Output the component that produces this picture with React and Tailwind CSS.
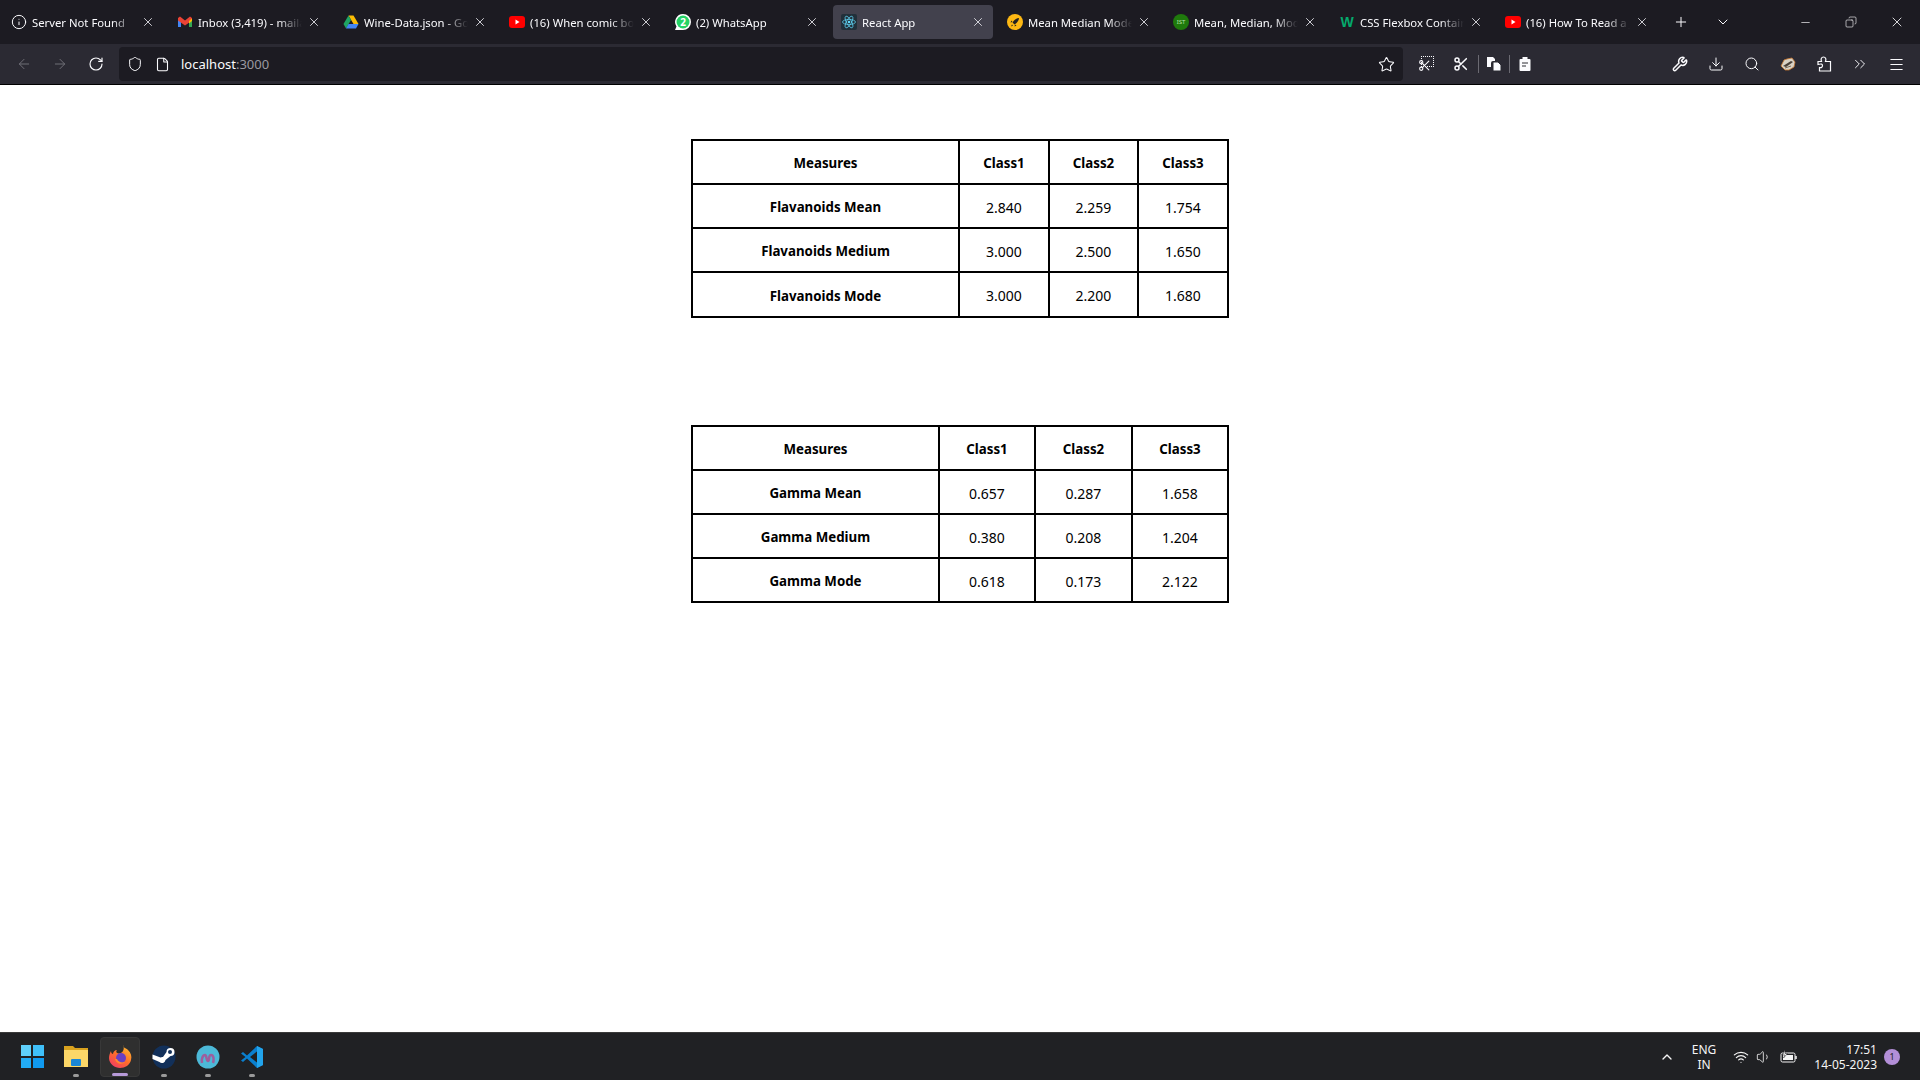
import { X, Plus, ChevronDown, Minus, Copy, ArrowLeft, ArrowRight, RotateCw, Shield, File, Star, Scissors, Wrench, Download, Search, ChevronsRight, Menu, ChevronUp, Wifi, Volume1, Info } from 'lucide-react'

const GmailIcon = () => (
  <svg viewBox="0 0 16 16" className="w-4 h-4">
    <path d="M1 4v9h3V7z" fill="#4285f4" />
    <path d="M15 4v9h-3V7z" fill="#34a853" />
    <path d="M1 4l2-1.500L8 6.500l5-4L15 4v2.500L8 11.500 1 6.500z" fill="#ea4335" />
    <path d="M12 7l3-2.500V7l-3 2.400z" fill="#fbbc04" />
  </svg>
)

const DriveIcon = () => (
  <svg viewBox="0 0 16 16" className="w-4 h-4">
    <path d="M5.500 1.500h5L15.500 10h-5z" fill="#fbbc04" />
    <path d="M5.500 1.500L.5 10 3 14.500 8 6z" fill="#1fa463" />
    <path d="M3 14.500h10l2.500-4.500H5.500z" fill="#4285f4" />
  </svg>
)

const YoutubeIcon = () => (
  <svg viewBox="0 0 16 16" className="w-4 h-4">
    <rect x="0" y="2" width="16" height="12" rx="3" fill="#f00" />
    <path d="M6.500 5.500L10.500 8l-4 2.500z" fill="#fff" />
  </svg>
)

const WhatsappIcon = () => (
  <span className="relative w-4 h-4 flex items-center justify-center">
    <svg viewBox="0 0 16 16" className="absolute inset-0 w-4 h-4">
      <path d="M8 0a8 8 0 0 1 0 16H0l1.500-3.500A8 8 0 0 1 8 0z" fill="#fff" />
      <circle cx="8" cy="8" r="6.500" fill="#25d366" />
    </svg>
    <span className="relative text-[10px] font-bold text-white leading-none">2</span>
  </span>
)

const ReactIcon = () => (
  <svg viewBox="0 0 16 16" className="w-4 h-4">
    <rect width="16" height="16" rx="2" fill="#22303a" />
    <g fill="none" stroke="#61dafb" strokeWidth="0.7">
      <ellipse cx="8" cy="8" rx="6.500" ry="2.500" />
      <ellipse cx="8" cy="8" rx="6.500" ry="2.500" transform="rotate(60 8 8)" />
      <ellipse cx="8" cy="8" rx="6.500" ry="2.500" transform="rotate(120 8 8)" />
    </g>
    <circle cx="8" cy="8" r="1.300" fill="#61dafb" />
  </svg>
)

const RocketIcon = () => (
  <svg viewBox="0 0 16 16" className="w-4 h-4">
    <circle cx="8" cy="8" r="8" fill="#fdb813" />
    <path d="M12 4c-3 .3-5 2-6.500 4.500L7.500 10.500C10 9 11.700 7 12 4z" fill="#222" />
    <path d="M5.500 8l-2 .5 1-2zM8 10.500l-.5 2 2-1zM5 10.500l-1 2 2-1z" fill="#222" />
  </svg>
)

const IstIcon = () => (
  <span className="w-4 h-4 rounded-full bg-[#1f7a0c] flex items-center justify-center text-[6px] leading-none text-[#b7e0a8]">IST</span>
)

const W3Icon = () => (
  <span className="w-4 h-4 flex items-start justify-center font-black text-[14px] leading-4 text-[#04aa6d] font-['Liberation_Sans',sans-serif]">W</span>
)

const tabs = [
  { title: 'Server Not Found', icon: <Info size={16} strokeWidth={1.5} className="text-[#fbfbfe]" /> },
  { title: 'Inbox (3,419) - mailarchive', icon: <GmailIcon /> },
  { title: 'Wine-Data.json - Google Drive', icon: <DriveIcon /> },
  { title: '(16) When comic book movies', icon: <YoutubeIcon /> },
  { title: '(2) WhatsApp', icon: <WhatsappIcon /> },
  { title: 'React App', icon: <ReactIcon />, active: true },
  { title: 'Mean Median Mode Calculator', icon: <RocketIcon /> },
  { title: 'Mean, Median, Mode and Range', icon: <IstIcon /> },
  { title: 'CSS Flexbox Container Properties', icon: <W3Icon /> },
  { title: '(16) How To Read a JSON File', icon: <YoutubeIcon /> },
]

const flavanoids = {
  rows: [
    ['Flavanoids Mean', '2.840', '2.259', '1.754'],
    ['Flavanoids Medium', '3.000', '2.500', '1.650'],
    ['Flavanoids Mode', '3.000', '2.200', '1.680'],
  ],
  widths: ['w-[267px]', 'w-[90px]', 'w-[89px]', 'w-[90px]'],
  lastRow: 'h-[45px]',
}

const gamma = {
  rows: [
    ['Gamma Mean', '0.657', '0.287', '1.658'],
    ['Gamma Medium', '0.380', '0.208', '1.204'],
    ['Gamma Mode', '0.618', '0.173', '2.122'],
  ],
  widths: ['w-[247px]', 'w-[96px]', 'w-[97px]', 'w-[96px]'],
  lastRow: 'h-[44px]',
}

function StatsTable({ data }) {
  const cell = 'border-2 border-black text-center'
  return (
    <table className="w-[537px] table-fixed border-collapse border-2 border-black text-black">
      <colgroup>
        {data.widths.map((w, i) => <col key={i} className={w} />)}
      </colgroup>
      <thead>
        <tr>
          {['Measures', 'Class1', 'Class2', 'Class3'].map(h => (
            <th key={h} className={`${cell} h-[44px] p-0 pt-[4px] text-[13.3px] font-bold`}>{h}</th>
          ))}
        </tr>
      </thead>
      <tbody>
        {data.rows.map((row, r) => {
          const h = r === 2 ? data.lastRow : 'h-[44px]'
          return (
            <tr key={row[0]}>
              <th className={`${cell} ${h} p-0 pt-[4px] text-[13.3px] font-bold`}>{row[0]}</th>
              {row.slice(1).map((v, i) => <td key={i} className={`${cell} ${h} p-0 pt-[2px] text-[14px] font-normal`}>{v}</td>)}
            </tr>
          )
        })}
      </tbody>
    </table>
  )
}

function Tab({ title, icon, active }) {
  return (
    <div className="w-[166px] px-[3px] flex items-center">
      <div className={`w-full h-[34px] rounded flex items-center pl-2 pr-2 gap-[5px] ${active ? 'bg-[#42414d]' : ''}`}>
        <span className="w-4 h-4 shrink-0 flex items-center justify-center">{icon}</span>
        <span className="flex-1 min-w-0 pt-[2px] overflow-hidden whitespace-nowrap text-[11.3px] text-[#fbfbfe] [mask-image:linear-gradient(to_left,transparent,black_24px)]">{title}</span>
        <X size={14} strokeWidth={1.5} className="shrink-0 text-[#e5e5ea]" />
      </div>
    </div>
  )
}

function ToolIcon({ children, className = 'w-9' }) {
  return <div className={`${className} h-10 flex items-center justify-center text-[#fbfbfe] shrink-0`}>{children}</div>
}

const ScreenshotIcon = () => (
  <span className="relative w-4 h-4 block">
    <span className="absolute top-0 right-0 w-[13px] h-[11px] border border-dotted border-[#fbfbfe]" />
    <Scissors size={13} strokeWidth={2} className="absolute bottom-0 left-0" />
  </span>
)

const DocsIcon = () => (
  <svg viewBox="0 0 16 16" className="w-4 h-4" fill="#fbfbfe">
    <path d="M1 1h6l2 2v2H7a2 2 0 0 0-2 2v4H1z" />
    <path d="M7 6h5l3 3v6H7z" stroke="#2b2a33" strokeWidth="1" />
  </svg>
)

const ClipboardIcon = () => (
  <svg viewBox="0 0 16 16" className="w-4 h-4">
    <path d="M5.500 1h5v2h2a1 1 0 0 1 1 1v10a1 1 0 0 1-1 1h-9a1 1 0 0 1-1-1V4a1 1 0 0 1 1-1h2z" fill="#fbfbfe" />
    <path d="M5 7h6M5 10h4" stroke="#2b2a33" strokeWidth="1" />
  </svg>
)

const ExtensionIcon = () => (
  <svg viewBox="0 0 16 16" className="w-4 h-4" fill="none" stroke="#fbfbfe" strokeWidth="1.200">
    <path d="M2 5.500h3.500C4.500 3 5.500 1 7.500 1s3 2 2 4.500H14.500V15H3.500v-3.500C5.500 12 6.500 11 6.500 9.500S5.500 7.500 2 8.500z" />
  </svg>
)

function FoxAvatar() {
  return (
    <svg viewBox="0 0 16 16" className="w-4 h-4">
      <path d="M1 10l3-6 3-1 5-1 3 4-1 5-5 3H5z" fill="#d9d2c5" stroke="#c9772f" strokeWidth="0.8" />
      <path d="M3 10l8-5 2 1-7 5z" fill="#4a4038" />
      <path d="M5 12l6-2" stroke="#7a6a58" strokeWidth="1" />
    </svg>
  )
}

const BatteryIcon = () => (
  <svg viewBox="0 0 18 14" className="w-[18px] h-[14px]" fill="none">
    <rect x="1" y="3" width="14" height="9" rx="1.500" stroke="#f5f5f5" strokeWidth="1" />
    <rect x="3" y="5" width="10" height="5" fill="#f5f5f5" />
    <path d="M16 6v3" stroke="#f5f5f5" strokeWidth="1.500" />
    <path d="M5 0L2.500 5H5L3.500 8 7.500 3.500H5z" fill="#f5f5f5" stroke="#202124" strokeWidth="0.5" />
  </svg>
)

const TaskDot = () => <span className="absolute bottom-0 left-1/2 -translate-x-1/2 w-[6px] h-[3px] rounded-full bg-[#9a9a9a]" />

function TaskbarIcons() {
  return (
    <div className="flex items-center pl-[10px] h-full">
      <div className="w-11 h-10 flex items-center justify-center">
        <div className="grid grid-cols-2 gap-[2px] w-[23px] h-[23px]">
          <span className="bg-[#5fd0fb]" />
          <span className="bg-[#3fc0fa]" />
          <span className="bg-[#22acf5]" />
          <span className="bg-[#109af0]" />
        </div>
      </div>
      <div className="relative w-11 h-10 flex items-center justify-center">
        <svg viewBox="0 0 24 24" className="w-6 h-6">
          <path d="M0 1h9l2 2h13v19H0z" fill="#d9a21f" />
          <path d="M0 5h24v17H0z" fill="#fcd768" />
          <rect x="7" y="14" width="10" height="7" rx="1" fill="#1b87d6" />
        </svg>
        <TaskDot />
      </div>
      <div className="relative w-[40px] mx-[2px] h-10 flex items-center justify-center rounded bg-[#2f2f2f] border border-[#383838]">
        <svg viewBox="0 0 24 24" className="w-6 h-6">
          <defs>
            <linearGradient id="ffBody" x1="0.8" y1="0" x2="0.1" y2="1">
              <stop offset="0" stopColor="#ffbd2e" />
              <stop offset="0.5" stopColor="#ff6b2b" />
              <stop offset="1" stopColor="#f0366a" />
            </linearGradient>
          </defs>
          <path d="M15 0c0 3 3 3 5 5 3 3 4 6 3 10-1 5-6 8-11 8S1 19 1 13c0-3 1-5 2-7 0 2 1 3 2 3 0-2 2-4 4-4-1 1-1 2 0 3 2 1 5 0 6-2 1-2 1-4 0-6z" fill="url(#ffBody)" />
          <circle cx="13" cy="13" r="5" fill="#6a3fc4" />
          <path d="M7 14c1 5 7 6 10 3-3 1-7 0-8-3z" fill="#ff8a2e" />
        </svg>
        <span className="absolute bottom-0 left-1/2 -translate-x-1/2 w-4 h-[3px] rounded-full bg-[#b79ad9]" />
      </div>
      <div className="relative w-11 h-10 flex items-center justify-center">
        <svg viewBox="0 0 24 24" className="w-6 h-6">
          <circle cx="12" cy="12" r="11.500" fill="#12305a" />
          <path d="M.5 14l7 3a3.500 3.500 0 0 0 6-2l5-4a4 4 0 1 0-4-4l-3.500 5a3.500 3.500 0 0 0-2.500.5L.5 9.500z" fill="#fff" />
          <circle cx="18" cy="7" r="2" fill="#12305a" />
        </svg>
        <TaskDot />
      </div>
      <div className="relative w-11 h-10 flex items-center justify-center">
        <svg viewBox="0 0 24 24" className="w-6 h-6">
          <circle cx="12" cy="12" r="11.500" fill="#4cb9d8" />
          <path d="M6 18c-1-4 1-8 3-8s1 6 3 6 0-6 3-6 3 5 2 8" fill="none" stroke="#9c5f9e" strokeWidth="2.500" />
        </svg>
        <TaskDot />
      </div>
      <div className="relative w-11 h-10 flex items-center justify-center">
        <svg viewBox="0 0 24 24" className="w-6 h-6">
          <path d="M17 1l6 3v16l-6 3L7 13.500 3 17l-2-1.500L5.500 12 1 8.500 3 7l4 3.500z" fill="#0a7fce" />
          <path d="M17 6.500L10 12l7 5.500z" fill="#202020" />
          <path d="M17 1l6 3v16l-6 3z" fill="#22a4ec" />
        </svg>
        <TaskDot />
      </div>
    </div>
  )
}

export default function App() {
  return (
    <div className="h-screen flex flex-col overflow-hidden bg-white font-['Noto_Sans',sans-serif]">
      {/* tab strip */}
      <div className="h-[44px] shrink-0 bg-[#1c1b22] flex items-center text-[#fbfbfe]">
        {tabs.map(t => <Tab key={t.title} {...t} />)}
        <div className="ml-[1px] w-10 flex justify-center"><Plus size={16} strokeWidth={1.5} /></div>
        <div className="w-11 flex justify-center"><ChevronDown size={16} strokeWidth={1.5} /></div>
        <div className="ml-auto flex items-center">
          <div className="w-[46px] flex justify-center"><Minus size={13} strokeWidth={1.25} /></div>
          <div className="w-[46px] flex justify-center"><Copy size={12} strokeWidth={1.25} className="-scale-x-100" /></div>
          <div className="w-[46px] flex justify-center"><X size={16} strokeWidth={1.25} /></div>
        </div>
      </div>

      {/* nav toolbar */}
      <div className="h-[41px] shrink-0 bg-[#2b2a33] border-b border-black flex items-center pl-[6px]">
        <ToolIcon><ArrowLeft size={16} strokeWidth={1.5} className="text-[#6f6e76]" /></ToolIcon>
        <ToolIcon><ArrowRight size={16} strokeWidth={1.5} className="text-[#6f6e76]" /></ToolIcon>
        <ToolIcon><RotateCw size={16} strokeWidth={1.75} /></ToolIcon>
        <div className="ml-[5px] w-[1284px] h-[34px] rounded bg-[#1c1b22] flex items-center pl-[8px] pr-[8px] text-[#fbfbfe]">
          <Shield size={16} strokeWidth={1.5} />
          <File size={15} strokeWidth={1.75} className="ml-[12px]" />
          <span className="ml-[11px] pt-[2px] text-[13px]">localhost<span className="text-[#9a99a0]">:3000</span></span>
          <Star size={17} strokeWidth={1.5} className="ml-auto" />
        </div>
        <div className="ml-[5px] flex items-center">
          <ToolIcon><ScreenshotIcon /></ToolIcon>
          <ToolIcon className="w-[34px]"><Scissors size={16} strokeWidth={2.25} /></ToolIcon>
          <span className="w-px h-[18px] bg-[#6b6a72]" />
          <ToolIcon className="w-[30px]"><DocsIcon /></ToolIcon>
          <span className="w-px h-[18px] bg-[#6b6a72]" />
          <ToolIcon className="w-[30px]"><ClipboardIcon /></ToolIcon>
        </div>
        <div className="ml-auto flex items-center pr-[6px]">
          <ToolIcon><Wrench size={16} strokeWidth={2.25} /></ToolIcon>
          <ToolIcon><Download size={16} strokeWidth={1.5} /></ToolIcon>
          <ToolIcon><Search size={16} strokeWidth={1.5} /></ToolIcon>
          <ToolIcon><FoxAvatar /></ToolIcon>
          <ToolIcon><ExtensionIcon /></ToolIcon>
          <ToolIcon><ChevronsRight size={18} strokeWidth={1.25} /></ToolIcon>
          <ToolIcon><Menu size={17} strokeWidth={1.5} /></ToolIcon>
        </div>
      </div>

      {/* page */}
      <div className="flex-1 min-h-0 bg-white flex flex-col items-center pt-[54px] gap-[107px]">
        <StatsTable data={flavanoids} />
        <StatsTable data={gamma} />
      </div>

      {/* windows taskbar */}
      <div className="h-[48px] shrink-0 bg-[#202124] border-t border-[#3a3a3a] flex items-center justify-between">
        <TaskbarIcons />
        <div className="flex items-center text-[#f5f5f5] text-[12px] leading-[15px]">
          <ChevronUp size={16} strokeWidth={2} />
          <div className="ml-[17px] text-center">
            <div>ENG</div>
            <div>IN</div>
          </div>
          <Wifi size={16} strokeWidth={1.75} className="ml-[17px]" />
          <Volume1 size={16} strokeWidth={1.25} className="ml-[7px]" />
          <span className="ml-[8px]"><BatteryIcon /></span>
          <div className="ml-[16px] text-right">
            <div>17:51</div>
            <div>14-05-2023</div>
          </div>
          <span className="ml-[7px] mr-[20px] w-4 h-4 rounded-full bg-[#b38fd8] text-[#222] text-[9px] flex items-center justify-center">1</span>
        </div>
      </div>
    </div>
  )
}
